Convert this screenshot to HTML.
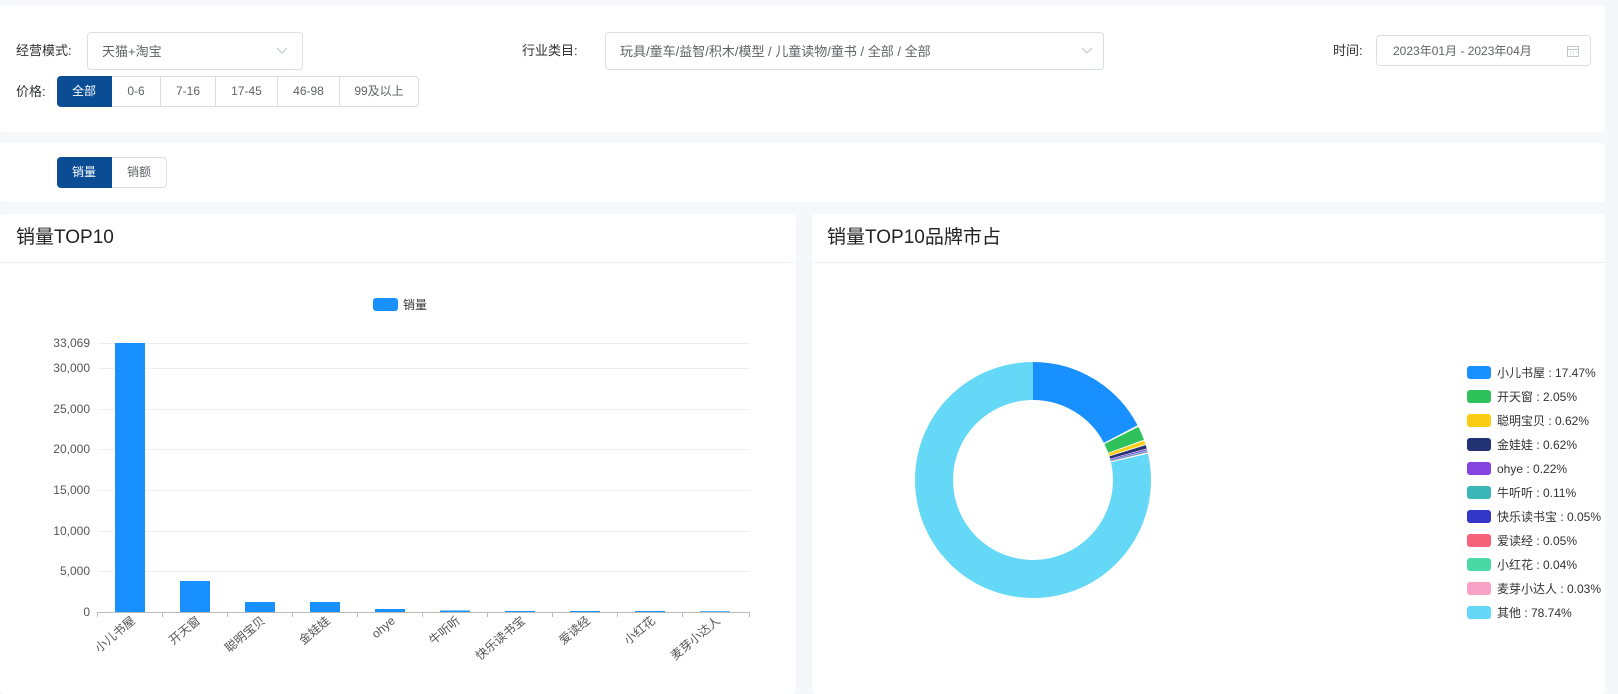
<!DOCTYPE html>
<html><head><meta charset="utf-8">
<style>
*{box-sizing:border-box;margin:0;padding:0}
body{width:1618px;height:679px;background:#f5f7fa;font-family:"Liberation Sans","Noto Sans CJK SC",sans-serif;color:#303133;position:relative;overflow:hidden}
.abs{position:absolute}
.panel{position:absolute;background:#fff;border-radius:4px}
.lbl{position:absolute;font-size:13px;color:#303133;line-height:16px}
.box{position:absolute;border:1px solid #dcdfe6;border-radius:4px;background:#fff;font-size:13px;color:#606266}
.btn{position:absolute;height:31px;line-height:29px;border:1px solid #dcdfe6;border-left:none;font-size:12px;color:#606266;text-align:center;background:#fff}
.btn.on{background:#0a4d95;border-color:#0a4d95;color:#fff}
.title{position:absolute;font-size:19px;color:#222;line-height:24px}
.hdr{position:absolute;height:1px;background:#ebeef5}
</style></head><body>

<div class="panel" style="left:0;top:5px;width:1605px;height:127px"></div>
<div class="lbl" style="left:16px;top:43px">经营模式:</div>
<div class="box" style="left:87px;top:32px;width:216px;height:38px"><span class="abs" style="left:14px;top:8px">天猫+淘宝</span>
<svg class="abs" style="left:188px;top:12px" width="12" height="10"><path d="M1 3 L6 8 L11 3" fill="none" stroke="#c0c4cc" stroke-width="1"/></svg></div>

<div class="lbl" style="left:522px;top:43px">行业类目:</div>
<div class="box" style="left:605px;top:32px;width:499px;height:38px"><span class="abs" style="left:14px;top:8px">玩具/童车/益智/积木/模型 / 儿童读物/童书 / 全部 / 全部</span>
<svg class="abs" style="left:475px;top:12px" width="12" height="10"><path d="M1 3 L6 8 L11 3" fill="none" stroke="#c0c4cc" stroke-width="1"/></svg></div>

<div class="lbl" style="left:1333px;top:43px">时间:</div>
<div class="box" style="left:1376px;top:35px;width:215px;height:31px"><span class="abs" style="left:16px;top:6px;font-size:12px">2023年01月 - 2023年04月</span>
<svg class="abs" style="left:190px;top:9px" width="12" height="12"><rect x="0.5" y="1.5" width="11" height="10" fill="none" stroke="#c0c4cc"/><path d="M0.5 4.5 H11.5 M3 7h1M6 7h1M9 7h1M3 9h1M6 9h1" stroke="#c0c4cc"/></svg></div>

<div class="lbl" style="left:16px;top:84px">价格:</div>
<div class="btn on" style="left:57px;top:76px;width:55px;border-radius:4px 0 0 4px">全部</div>
<div class="btn" style="left:112px;top:76px;width:49px">0-6</div>
<div class="btn" style="left:161px;top:76px;width:55px">7-16</div>
<div class="btn" style="left:216px;top:76px;width:62px">17-45</div>
<div class="btn" style="left:278px;top:76px;width:62px">46-98</div>
<div class="btn" style="left:340px;top:76px;width:79px;border-radius:0 4px 4px 0">99及以上</div>

<div class="panel" style="left:0;top:143px;width:1605px;height:59px"></div>
<div class="btn on" style="left:57px;top:157px;width:55px;border-radius:4px 0 0 4px">销量</div>
<div class="btn" style="left:112px;top:157px;width:55px;border-radius:0 4px 4px 0">销额</div>

<div class="panel" style="left:0;top:214px;width:796px;height:480px"></div>
<div class="title" style="left:16px;top:226px">销量TOP10</div>
<div class="hdr" style="left:0;top:262px;width:796px"></div>

<div class="panel" style="left:812px;top:214px;width:793px;height:480px"></div>
<div class="title" style="left:827px;top:226px">销量TOP10品牌市占</div>
<div class="hdr" style="left:812px;top:262px;width:793px"></div>

<svg class="abs" style="left:0;top:0" width="800" height="679" font-family="Liberation Sans, Noto Sans CJK SC, sans-serif">
<rect x="373" y="298" width="25" height="13" rx="3" fill="#1890ff"/>
<text x="403" y="309" font-size="12" fill="#333">销量</text>
<g stroke="#eeeeee" stroke-width="1">
<line x1="98" y1="343.5" x2="750" y2="343.5"/>
<line x1="98" y1="368.5" x2="750" y2="368.5"/>
<line x1="98" y1="409.5" x2="750" y2="409.5"/>
<line x1="98" y1="449.5" x2="750" y2="449.5"/>
<line x1="98" y1="490.5" x2="750" y2="490.5"/>
<line x1="98" y1="531.5" x2="750" y2="531.5"/>
<line x1="98" y1="571.5" x2="750" y2="571.5"/>
</g>
<g font-size="12" fill="#555" text-anchor="end">
<text x="90" y="347">33,069</text>
<text x="90" y="372">30,000</text>
<text x="90" y="413">25,000</text>
<text x="90" y="453">20,000</text>
<text x="90" y="494">15,000</text>
<text x="90" y="535">10,000</text>
<text x="90" y="575">5,000</text>
<text x="90" y="616">0</text>
</g>
<g fill="#1890ff">
<rect x="115" y="343" width="30" height="269"/>
<rect x="180" y="581" width="30" height="31"/>
<rect x="245" y="602" width="30" height="10"/>
<rect x="310" y="602" width="30" height="10"/>
<rect x="375" y="609" width="30" height="3"/>
<rect x="440" y="610.5" width="30" height="1.5"/>
<rect x="505" y="611" width="30" height="1"/>
<rect x="570" y="611" width="30" height="1"/>
<rect x="635" y="611" width="30" height="1"/>
<rect x="700" y="611.3" width="30" height="0.7"/>
</g>
<line x1="97" y1="612.5" x2="750" y2="612.5" stroke="#bbb"/>
<g stroke="#bbb"><line x1="97.5" y1="612" x2="97.5" y2="617"/><line x1="162.5" y1="612" x2="162.5" y2="617"/><line x1="227.5" y1="612" x2="227.5" y2="617"/><line x1="292.5" y1="612" x2="292.5" y2="617"/><line x1="357.5" y1="612" x2="357.5" y2="617"/><line x1="422.5" y1="612" x2="422.5" y2="617"/><line x1="487.5" y1="612" x2="487.5" y2="617"/><line x1="552.5" y1="612" x2="552.5" y2="617"/><line x1="617.5" y1="612" x2="617.5" y2="617"/><line x1="682.5" y1="612" x2="682.5" y2="617"/><line x1="749.5" y1="612" x2="749.5" y2="617"/></g>
<g font-size="12" fill="#555" text-anchor="end">
<text transform="translate(136,622) rotate(-40)">小儿书屋</text>
<text transform="translate(201,622) rotate(-40)">开天窗</text>
<text transform="translate(266,622) rotate(-40)">聪明宝贝</text>
<text transform="translate(331,622) rotate(-40)">金娃娃</text>
<text transform="translate(396,622) rotate(-40)">ohye</text>
<text transform="translate(461,622) rotate(-40)">牛听听</text>
<text transform="translate(526,622) rotate(-40)">快乐读书宝</text>
<text transform="translate(591,622) rotate(-40)">爱读经</text>
<text transform="translate(656,622) rotate(-40)">小红花</text>
<text transform="translate(721,622) rotate(-40)">麦芽小达人</text>
</g>
</svg>

<svg class="abs" style="left:812px;top:262px" width="793" height="417" font-family="Liberation Sans, Noto Sans CJK SC, sans-serif">
<g transform="translate(221,218) rotate(-90)" fill="none" stroke-width="38">
<circle r="99" stroke="#1890ff" stroke-dasharray="107.7 622.04" stroke-dashoffset="0"/>
<circle r="99" stroke="#2fc25b" stroke-dasharray="11.8 622.04" stroke-dashoffset="-109.2"/>
<circle r="99" stroke="#facc14" stroke-dasharray="3.0 622.04" stroke-dashoffset="-121.9"/>
<circle r="99" stroke="#223273" stroke-dasharray="3.0 622.04" stroke-dashoffset="-125.7"/>
<circle r="99" stroke="#8543e0" stroke-dasharray="1.0 622.04" stroke-dashoffset="-129.2"/>
<circle r="99" stroke="#13c2c2" stroke-dasharray="0.6 622.04" stroke-dashoffset="-130.5"/>
<circle r="99" stroke="#3436c7" stroke-dasharray="0.3 622.04" stroke-dashoffset="-131.2"/>
<circle r="99" stroke="#f04864" stroke-dasharray="0.3 622.04" stroke-dashoffset="-131.5"/>
<circle r="99" stroke="#4ad9a4" stroke-dasharray="0.25 622.04" stroke-dashoffset="-131.8"/>
<circle r="99" stroke="#f7a1c4" stroke-dasharray="0.19 622.04" stroke-dashoffset="-132.06"/>
<circle r="99" stroke="#64d8f6" stroke-dasharray="488.8 622.04" stroke-dashoffset="-133.2"/>
</g>
<g font-size="12" fill="#333">
<rect x="655" y="104" width="24" height="13" rx="3" fill="#1890ff"/><text x="685" y="115">小儿书屋 : 17.47%</text>
<rect x="655" y="128" width="24" height="13" rx="3" fill="#2fc25b"/><text x="685" y="139">开天窗 : 2.05%</text>
<rect x="655" y="152" width="24" height="13" rx="3" fill="#facc14"/><text x="685" y="163">聪明宝贝 : 0.62%</text>
<rect x="655" y="176" width="24" height="13" rx="3" fill="#223273"/><text x="685" y="187">金娃娃 : 0.62%</text>
<rect x="655" y="200" width="24" height="13" rx="3" fill="#8543e0"/><text x="685" y="211">ohye : 0.22%</text>
<rect x="655" y="224" width="24" height="13" rx="3" fill="#3ab5b8"/><text x="685" y="235">牛听听 : 0.11%</text>
<rect x="655" y="248" width="24" height="13" rx="3" fill="#3436c7"/><text x="685" y="259">快乐读书宝 : 0.05%</text>
<rect x="655" y="272" width="24" height="13" rx="3" fill="#f5627a"/><text x="685" y="283">爱读经 : 0.05%</text>
<rect x="655" y="296" width="24" height="13" rx="3" fill="#4ad9a4"/><text x="685" y="307">小红花 : 0.04%</text>
<rect x="655" y="320" width="24" height="13" rx="3" fill="#f7a1c4"/><text x="685" y="331">麦芽小达人 : 0.03%</text>
<rect x="655" y="344" width="24" height="13" rx="3" fill="#64d8f6"/><text x="685" y="355">其他 : 78.74%</text>
</g>
</svg>
</body></html>
